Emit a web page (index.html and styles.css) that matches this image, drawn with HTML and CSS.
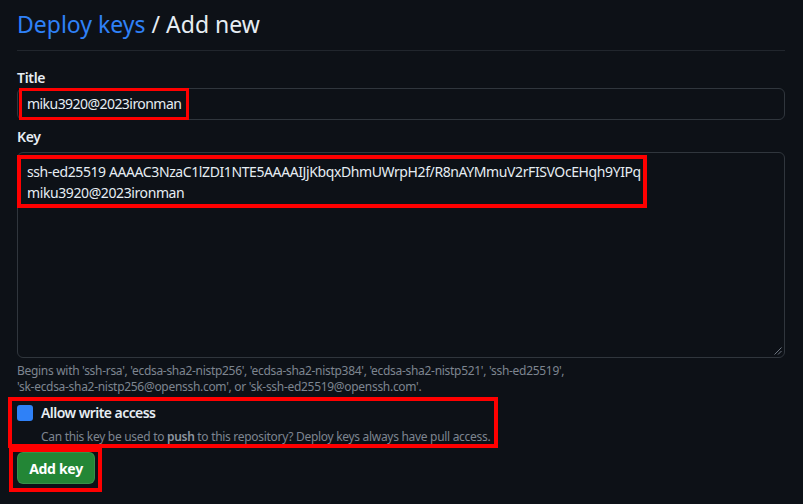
FILE: index.html
```html
<!DOCTYPE html>
<html lang="en">
<head>
<meta charset="utf-8">
<title>Deploy keys / Add new</title>
<link rel="stylesheet" href="styles.css">
</head>
<body>
<main class="page">
  <div class="subhead">
    <h1 class="subhead-heading"><a class="crumb" href="#">Deploy keys</a> / Add new</h1>
  </div>
  <form class="form">
    <label class="label label-title">Title</label>
    <div class="input">
      <span class="mark mark-title">miku3920@2023ironman</span>
    </div>
    <label class="label label-key">Key</label>
    <div class="textarea">
      <div class="mark mark-key">ssh-ed25519 AAAAC3NzaC1lZDI1NTE5AAAAIJjKbqxDhmUWrpH2f/R8nAYMmuV2rFISVOcEHqh9YIPq
miku3920@2023ironman</div>
      <svg class="grip" width="8" height="8" viewBox="0 0 8 8"><path d="M7.5 0.5 L0.5 7.5 M7.5 4 L4 7.5" stroke="#6e7681" stroke-width="1" fill="none"/></svg>
    </div>
    <p class="note">Begins with 'ssh-rsa', 'ecdsa-sha2-nistp256', 'ecdsa-sha2-nistp384', 'ecdsa-sha2-nistp521', 'ssh-ed25519',<br>'sk-ecdsa-sha2-nistp256@openssh.com', or 'sk-ssh-ed25519@openssh.com'.</p>
    <div class="mark mark-check">
      <div class="check-row">
        <span class="checkbox"></span>
        <span class="check-label">Allow write access</span>
      </div>
      <p class="check-desc">Can this key be used to <b>push</b> to this repository? Deploy keys always have pull access.</p>
    </div>
    <div class="mark mark-btn">
      <button type="button" class="btn">Add key</button>
    </div>
  </form>
</main>
</body>
</html>
```

FILE: styles.css
```css
* { box-sizing: border-box; }
html, body {
  margin: 0;
  background: #0d1117;
  color: #e6edf3;
  font-family: "Noto Sans", "Open Sans", sans-serif;
  font-size: 14px;
}
.page {
  width: 803px;
  height: 504px;
  padding: 0 18px 0 17px;
  overflow: hidden;
}
.subhead {
  padding-top: 8px;
  padding-bottom: 9px;
  border-bottom: 1px solid #21262d;
}
.subhead-heading {
  margin: 0;
  font-size: 23px;
  font-weight: 400;
  line-height: 33px;
  color: #e6edf3;
}
.crumb {
  color: #2f81f7;
  text-decoration: none;
}
.form {
  display: flex;
  flex-direction: column;
  align-items: flex-start;
  letter-spacing: -0.45px;
}
.label {
  display: block;
  font-weight: 600;
  font-size: 14px;
  line-height: 20px;
  letter-spacing: -0.3px;
}
.label-title { margin-top: 17px; }
.label-key { margin-top: 7px; margin-bottom: 5px; }
.input {
  width: 768px;
  height: 32px;
  border: 1px solid #30363d;
  border-radius: 6px;
  display: flex;
}
.mark { border: 3px solid #ff0000; }
.mark-title {
  margin: -1px 0 -1px 1px;
  padding: 0 5px;
  line-height: 26px;
  white-space: nowrap;
  letter-spacing: -0.55px;
}
.textarea {
  position: relative;
  width: 768px;
  height: 206px;
  border: 1px solid #30363d;
  border-radius: 6px;
  padding-top: 2px;
}
.mark-key {
  width: fit-content;
  margin-left: -1px;
  border-width: 4px;
  padding: 2px 2px 1px 6px;
  line-height: 21px;
  white-space: pre;
  letter-spacing: -0.4px;
}
.grip {
  position: absolute;
  right: 2px;
  bottom: 2px;
}
.note {
  margin: 5px 0 0;
  font-size: 12px;
  line-height: 16px;
  color: #7d8590;
  letter-spacing: -0.3px;
}
.mark-check {
  margin: 2px 0 0 -9px;
  border-width: 4px;
  padding: 2px 4px 0 5px;
}
.check-row {
  display: flex;
  align-items: center;
  gap: 8px;
  height: 20px;
}
.checkbox {
  width: 16px;
  height: 16px;
  border-radius: 3px;
  background: #2f81f7;
}
.check-label {
  font-weight: 600;
  line-height: 20px;
  letter-spacing: -0.55px;
}
.check-desc {
  margin: 6px 0 0 24px;
  font-size: 12px;
  line-height: 15px;
  color: #7d8590;
  letter-spacing: -0.3px;
}
.check-desc b { font-weight: 600; color: #8d96a0; }
.mark-btn {
  margin-left: -8px;
  border-width: 4px;
  padding: 0 3px 4px 4px;
}
.btn {
  display: block;
  width: 78px;
  height: 32px;
  border: 1px solid rgba(240,246,252,0.1);
  border-radius: 6px;
  background: #238636;
  color: #ffffff;
  font-family: inherit;
  font-size: 14px;
  font-weight: 700;
  letter-spacing: -0.3px;
  padding: 0;
}
```
